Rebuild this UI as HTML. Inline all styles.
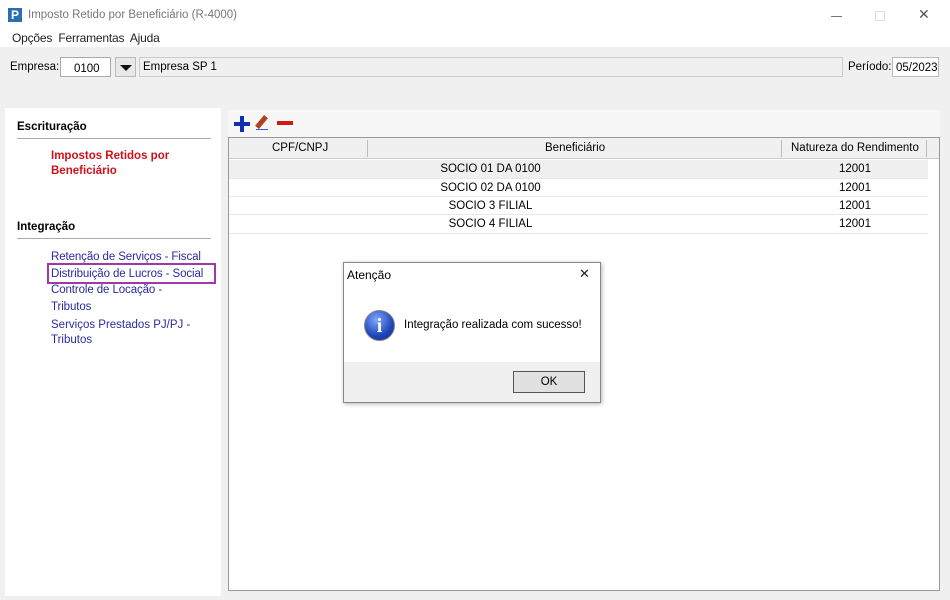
<!DOCTYPE html><html><head><meta charset="utf-8"><style>
*{margin:0;padding:0;box-sizing:border-box}
body{width:950px;height:600px;overflow:hidden;background:#f0f0f0;font-family:"Liberation Sans",sans-serif;font-size:11.5px;color:#000;position:relative}
.a{position:absolute}
.row{position:absolute;left:229px;width:699px;height:18px;border-bottom:1px solid #e8e8e8;text-align:center;line-height:18px}
</style></head><body>
<div class="a" style="left:0;top:0;width:950px;height:47px;background:#fff"></div>
<div class="a" style="left:8px;top:8px;width:14px;height:14px;background:#2a6fb0;color:#fff;font-weight:bold;font-size:12px;line-height:14px;text-align:center">P</div>
<div class="a" style="left:28px;top:9px;font-size:11.5px;color:#777">Imposto Retido por Beneficiário (R-4000)</div>
<div class="a" style="left:831px;top:16px;width:11px;border-top:1px solid #777"></div>
<div class="a" style="left:875px;top:11px;width:10px;height:10px;border:1px solid #ddd"></div>
<div class="a" style="left:918px;top:6px;font-size:14px;color:#555">✕</div>
<div class="a" style="left:12px;top:31px;font-size:12px;color:#222;letter-spacing:-0.2px">Opções&nbsp; Ferramentas&nbsp; Ajuda</div>
<div class="a" style="left:10px;top:61px">Empresa:</div>
<div class="a" style="left:60px;top:57px;width:51px;height:20px;background:#fff;border:1px solid #aaa;padding:5px 0 0 13px">0100</div>
<div class="a" style="left:115px;top:57px;width:21px;height:20px;background:#e8e8e8;border:1px solid #bbb"><div style="margin:7px 0 0 4px;width:0;height:0;border-left:6px solid transparent;border-right:6px solid transparent;border-top:6px solid #111"></div></div>
<div class="a" style="left:139px;top:57px;width:704px;height:20px;border:1px solid #ccc;padding:3px 3px">Empresa SP 1</div>
<div class="a" style="left:848px;top:61px">Período:</div>
<div class="a" style="left:892px;top:57px;width:47px;height:20px;background:#fff;border:1px solid #bbb;padding:4px 3px">05/2023</div>
<div class="a" style="left:5px;top:108px;width:216px;height:488px;background:#fff"></div>
<div class="a" style="left:17px;top:121px;font-weight:bold">Escrituração</div>
<div class="a" style="left:17px;top:138px;width:194px;border-top:1px solid #aaa"></div>
<div class="a" style="left:51px;top:149px;color:#d0101a;font-weight:bold;line-height:15px">Impostos Retidos por<br>Beneficiário</div>
<div class="a" style="left:17px;top:221px;font-weight:bold">Integração</div>
<div class="a" style="left:17px;top:238px;width:194px;border-top:1px solid #aaa"></div>
<div class="a" style="left:51px;top:249px;color:#2a2aa0;line-height:16.5px;letter-spacing:-0.1px">Retenção de Serviços - Fiscal<br>Distribuição de Lucros - Social<br>Controle de Locação -<br><span style="line-height:14px">Tributos</span></div>
<div class="a" style="left:51px;top:318px;color:#2a2aa0;line-height:15px">Serviços Prestados PJ/PJ -<br>Tributos</div>
<div class="a" style="left:47px;top:263px;width:169px;height:21px;border:2px solid #9b3aa8"></div>
<div class="a" style="left:228px;top:110px;width:712px;height:27px;background:#f7f7f7"></div>
<div class="a" style="left:234px;top:122px;width:16px;height:4px;background:#1030b0"></div>
<div class="a" style="left:240px;top:116px;width:4px;height:16px;background:#1030b0"></div>
<div class="a" style="left:259px;top:115px;width:5px;height:14px;background:#b04020;transform:rotate(40deg)"></div>
<div class="a" style="left:256px;top:129px;width:12px;border-top:1px solid #3060c0"></div>
<div class="a" style="left:277px;top:121px;width:16px;height:4px;background:#d01818"></div>
<div class="a" style="left:228px;top:137px;width:712px;height:454px;background:#fff;border:1px solid #999"></div>
<div class="a" style="left:229px;top:138px;width:710px;height:21px;background:#f0f0f0;border-bottom:1px solid #ccc"></div>
<div class="a" style="left:272px;top:142px">CPF/CNPJ</div>
<div class="a" style="left:367px;top:140px;height:17px;border-left:1px solid #bbb"></div>
<div class="a" style="left:545px;top:142px">Beneficiário</div>
<div class="a" style="left:781px;top:140px;height:17px;border-left:1px solid #bbb"></div>
<div class="a" style="left:791px;top:142px">Natureza do Rendimento</div>
<div class="a" style="left:926px;top:140px;height:17px;border-left:1px solid #bbb"></div>
<div class="row" style="top:160px;height:19px;line-height:19px;background:#efefef"><span class="a" style="left:210px;width:103px">SOCIO 01 DA 0100</span><span class="a" style="left:590px;width:72px">12001</span></div>
<div class="row" style="top:179px"><span class="a" style="left:210px;width:103px">SOCIO 02 DA 0100</span><span class="a" style="left:590px;width:72px">12001</span></div>
<div class="row" style="top:197px"><span class="a" style="left:210px;width:103px">SOCIO 3 FILIAL</span><span class="a" style="left:590px;width:72px">12001</span></div>
<div class="row" style="top:215px;height:19px;line-height:19px"><span class="a" style="left:210px;width:103px">SOCIO 4 FILIAL</span><span class="a" style="left:590px;width:72px">12001</span></div>
<div class="a" style="left:343px;top:262px;width:258px;height:141px;background:#fff;border:1px solid #888;box-shadow:1px 1px 4px rgba(0,0,0,.3)"></div>
<div class="a" style="left:347px;top:268px;font-size:12px">Atenção</div>
<div class="a" style="left:579px;top:266px;font-size:13px;color:#222">✕</div>
<div class="a" style="left:364px;top:310px;width:31px;height:31px;border-radius:50%;background:radial-gradient(circle at 40% 30%,#7fa8ff,#1f46b8 60%,#102a80);border:1px solid #888;color:#fff;font-family:'Liberation Serif',serif;font-weight:bold;font-size:20px;text-align:center;line-height:30px">i</div>
<div class="a" style="left:404px;top:319px">Integração realizada com sucesso!</div>
<div class="a" style="left:344px;top:362px;width:256px;height:40px;background:#f0f0f0"></div>
<div class="a" style="left:513px;top:371px;width:72px;height:22px;background:#e1e1e1;border:1px solid #555;text-align:center;line-height:20px">OK</div>
</body></html>
